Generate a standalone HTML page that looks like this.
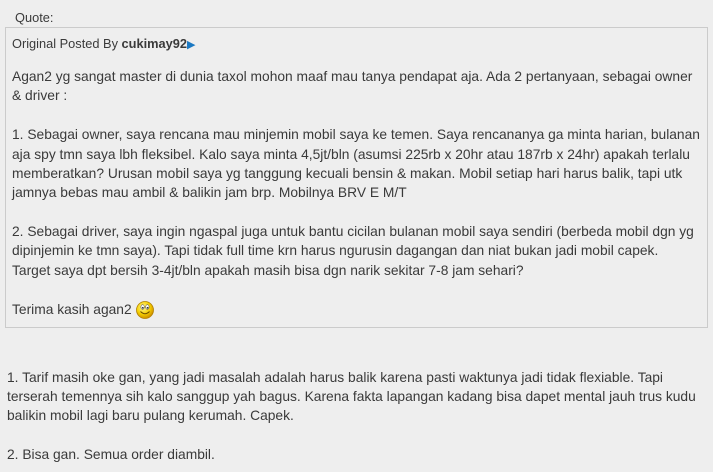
<!DOCTYPE html>
<html><head><meta charset="utf-8"><style>
html,body{margin:0;padding:0;background:#eeeeee;width:713px;height:472px;overflow:hidden}
body{font-family:"Liberation Sans",Arial,sans-serif;color:#3a3a3a;font-size:13.8px;position:relative}
.l{position:absolute;left:12px;white-space:nowrap;line-height:19px;height:19px}
.o{left:7px}
.box{position:absolute;left:5px;top:27px;width:703px;height:301px;border:1px solid #cbcbcb;box-sizing:border-box}
.small{font-size:12.8px}
</style></head><body>
<div class="l small" style="left:15px;top:8px">Quote:</div>
<div class="box"></div>
<div class="l small" style="top:34px">Original Posted By <b>cukimay92</b><span style="color:#1a78c2;font-size:11px">&#9654;</span></div>
<div class="l" style="top:67px">Agan2 yg sangat master di dunia taxol mohon maaf mau tanya pendapat aja. Ada 2 pertanyaan, sebagai owner</div>
<div class="l" style="top:86px">&amp; driver :</div>
<div class="l" style="top:125px">1. Sebagai owner, saya rencana mau minjemin mobil saya ke temen. Saya rencananya ga minta harian, bulanan</div>
<div class="l" style="top:145px">aja spy tmn saya lbh fleksibel. Kalo saya minta 4,5jt/bln (asumsi 225rb x 20hr atau 187rb x 24hr) apakah terlalu</div>
<div class="l" style="top:164px">memberatkan? Urusan mobil saya yg tanggung kecuali bensin &amp; makan. Mobil setiap hari harus balik, tapi utk</div>
<div class="l" style="top:183px">jamnya bebas mau ambil &amp; balikin jam brp. Mobilnya BRV E M/T</div>
<div class="l" style="top:222px">2. Sebagai driver, saya ingin ngaspal juga untuk bantu cicilan bulanan mobil saya sendiri (berbeda mobil dgn yg</div>
<div class="l" style="top:241px">dipinjemin ke tmn saya). Tapi tidak full time krn harus ngurusin dagangan dan niat bukan jadi mobil capek.</div>
<div class="l" style="top:261px">Target saya dpt bersih 3-4jt/bln apakah masih bisa dgn narik sekitar 7-8 jam sehari?</div>
<div class="l" style="top:300px">Terima kasih agan2 <svg width="20" height="20" viewBox="0 0 20 20" style="vertical-align:-6px"><defs><radialGradient id="g" cx="40%" cy="35%" r="65%"><stop offset="0" stop-color="#fff7a0"/><stop offset="0.6" stop-color="#f5d000"/><stop offset="1" stop-color="#d09000"/></radialGradient></defs><circle cx="10" cy="10" r="8.5" fill="url(#g)" stroke="#b08000" stroke-width="0.8"/><ellipse cx="7.6" cy="7" rx="1.7" ry="2.3" fill="#fff" stroke="#555" stroke-width="0.6"/><ellipse cx="12.4" cy="7" rx="1.7" ry="2.3" fill="#fff" stroke="#555" stroke-width="0.6"/><circle cx="7.8" cy="7.8" r="0.9" fill="#333"/><circle cx="12.6" cy="7.8" r="0.9" fill="#333"/><path d="M5.5 11.5 Q10 16 14.5 11.5" fill="none" stroke="#6a4a00" stroke-width="1"/></svg></div>
<div class="l o" style="top:368px">1. Tarif masih oke gan, yang jadi masalah adalah harus balik karena pasti waktunya jadi tidak flexiable. Tapi</div>
<div class="l o" style="top:387px">terserah temennya sih kalo sanggup yah bagus. Karena fakta lapangan kadang bisa dapet mental jauh trus kudu</div>
<div class="l o" style="top:406px">balikin mobil lagi baru pulang kerumah. Capek.</div>
<div class="l o" style="top:445px">2. Bisa gan. Semua order diambil.</div>
</body></html>
